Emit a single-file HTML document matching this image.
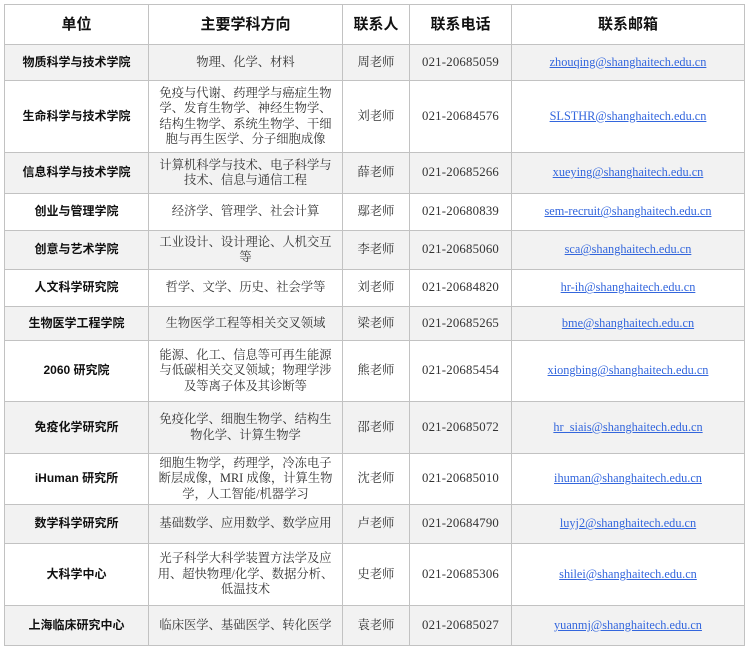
<!DOCTYPE html>
<html><head><meta charset="utf-8"><style>
body{margin:0;background:#fff;width:747px;height:649px;overflow:hidden}
table{position:absolute;left:4px;top:4px;border-collapse:collapse;table-layout:fixed;width:740px;font-family:"Liberation Serif","Noto Serif CJK SC",serif;font-size:12.3px;color:#333}
td,th{border:1px solid #c2c2c2;text-align:center;vertical-align:middle;padding:0 8px;line-height:15.5px;box-sizing:border-box}
th{font-size:15px;font-weight:bold;color:#111;font-family:"Liberation Sans","Noto Sans CJK SC",sans-serif}
td:first-child{font-weight:bold;color:#111;font-family:"Liberation Sans","Noto Sans CJK SC",sans-serif;font-size:12px}
td:nth-child(4){font-size:12.8px;letter-spacing:0.2px}
tr:nth-child(even) td{background:#f2f2f2}
a{color:#3366dd;text-decoration:underline}
</style></head><body>
<table>
<colgroup><col style="width:144px"><col style="width:194px"><col style="width:67px"><col style="width:102px"><col style="width:233px"></colgroup>
<tr style="height:40px"><th>单位</th><th>主要学科方向</th><th>联系人</th><th>联系电话</th><th>联系邮箱</th></tr>
<tr style="height:36px"><td>物质科学与技术学院</td><td>物理、化学、材料</td><td>周老师</td><td>021-20685059</td><td><a>zhouqing@shanghaitech.edu.cn</a></td></tr>
<tr style="height:72px"><td>生命科学与技术学院</td><td>免疫与代谢、药理学与癌症生物学、发育生物学、神经生物学、结构生物学、系统生物学、干细胞与再生医学、分子细胞成像</td><td>刘老师</td><td>021-20684576</td><td><a>SLSTHR@shanghaitech.edu.cn</a></td></tr>
<tr style="height:41px"><td>信息科学与技术学院</td><td>计算机科学与技术、电子科学与技术、信息与通信工程</td><td>薛老师</td><td>021-20685266</td><td><a>xueying@shanghaitech.edu.cn</a></td></tr>
<tr style="height:37px"><td>创业与管理学院</td><td>经济学、管理学、社会计算</td><td>鄢老师</td><td>021-20680839</td><td><a>sem-recruit@shanghaitech.edu.cn</a></td></tr>
<tr style="height:39px"><td>创意与艺术学院</td><td>工业设计、设计理论、人机交互等</td><td>李老师</td><td>021-20685060</td><td><a>sca@shanghaitech.edu.cn</a></td></tr>
<tr style="height:37px"><td>人文科学研究院</td><td>哲学、文学、历史、社会学等</td><td>刘老师</td><td>021-20684820</td><td><a>hr-ih@shanghaitech.edu.cn</a></td></tr>
<tr style="height:34px"><td>生物医学工程学院</td><td>生物医学工程等相关交叉领域</td><td>梁老师</td><td>021-20685265</td><td><a>bme@shanghaitech.edu.cn</a></td></tr>
<tr style="height:61px"><td>2060 研究院</td><td>能源、化工、信息等可再生能源与低碳相关交叉领域；物理学涉及等离子体及其诊断等</td><td>熊老师</td><td>021-20685454</td><td><a>xiongbing@shanghaitech.edu.cn</a></td></tr>
<tr style="height:52px"><td>免疫化学研究所</td><td>免疫化学、细胞生物学、结构生物化学、计算生物学</td><td>邵老师</td><td>021-20685072</td><td><a>hr_siais@shanghaitech.edu.cn</a></td></tr>
<tr style="height:51px"><td>iHuman 研究所</td><td>细胞生物学，药理学，冷冻电子断层成像，MRI 成像，计算生物学，人工智能/机器学习</td><td>沈老师</td><td>021-20685010</td><td><a>ihuman@shanghaitech.edu.cn</a></td></tr>
<tr style="height:39px"><td>数学科学研究所</td><td>基础数学、应用数学、数学应用</td><td>卢老师</td><td>021-20684790</td><td><a>luyj2@shanghaitech.edu.cn</a></td></tr>
<tr style="height:62px"><td>大科学中心</td><td>光子科学大科学装置方法学及应用、超快物理/化学、数据分析、低温技术</td><td>史老师</td><td>021-20685306</td><td><a>shilei@shanghaitech.edu.cn</a></td></tr>
<tr style="height:40px"><td>上海临床研究中心</td><td>临床医学、基础医学、转化医学</td><td>袁老师</td><td>021-20685027</td><td><a>yuanmj@shanghaitech.edu.cn</a></td></tr>
</table>
</body></html>
